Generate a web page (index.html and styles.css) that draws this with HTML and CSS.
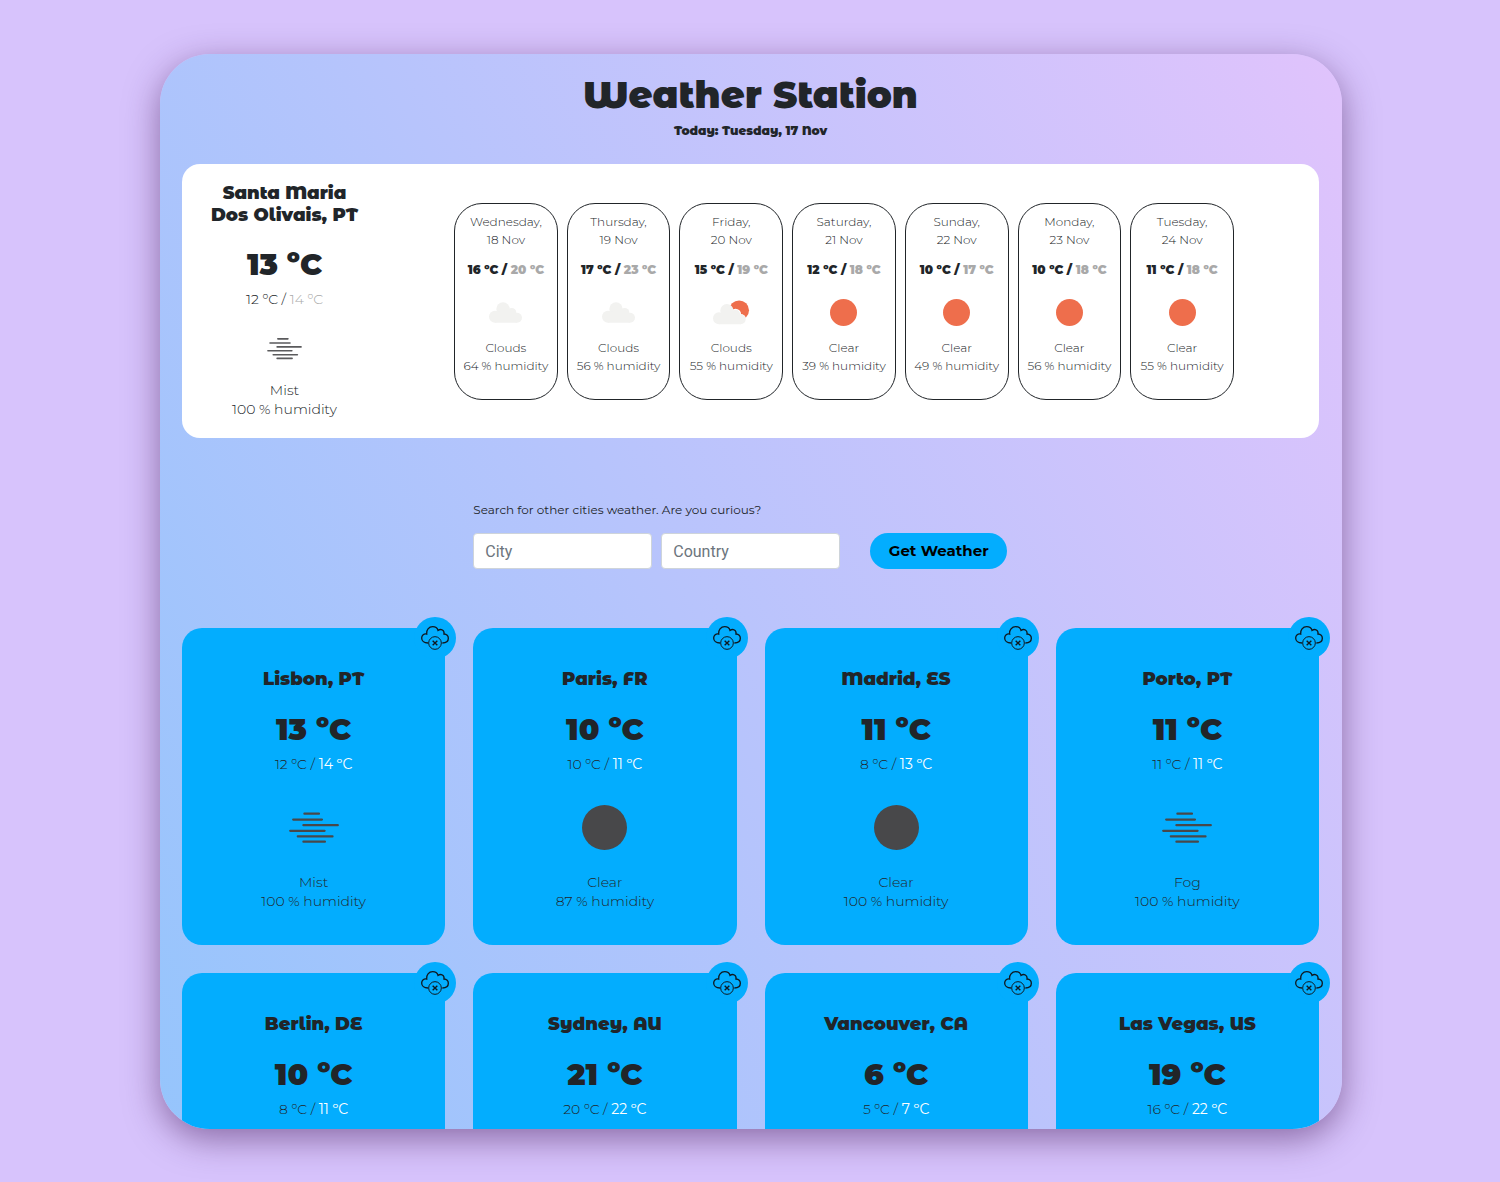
FILE: index.html
```html
<!DOCTYPE html>
<html lang="en">
<head>
<meta charset="utf-8">
<meta name="viewport" content="width=device-width, initial-scale=1">
<title>Weather Station</title>
<link rel="stylesheet" href="styles.css">
</head>
<body>
<svg class="sprite" aria-hidden="true">
  <symbol id="mist" viewBox="0 0 150 100">
    <path d="M46 8H90M12 26H99M43 43H147M3 60H107M26 77H131M43 93H108" fill="none" stroke="currentColor" stroke-width="7" stroke-linecap="round"/>
  </symbol>
  <symbol id="cloud" viewBox="0 0 99 63">
    <g fill="#f2f2f0">
      <circle cx="18" cy="44" r="18"/>
      <circle cx="42" cy="21" r="20"/>
      <circle cx="68" cy="32" r="14"/>
      <circle cx="84" cy="47" r="15"/>
      <path d="M18 62H84V40L68 24H42L22 30Z"/>
    </g>
  </symbol>
  <symbol id="partly" viewBox="0 0 112 75">
    <circle cx="79" cy="31" r="30" fill="#ee6e4c"/>
    <circle cx="68" cy="43" r="17" fill="#fff"/>
    <circle cx="84" cy="58" r="16" fill="#fff"/>
    <g fill="#f2f2f0">
      <circle cx="18" cy="55" r="18"/>
      <circle cx="42" cy="32" r="20"/>
      <circle cx="68" cy="43" r="14"/>
      <circle cx="84" cy="58" r="15"/>
      <path d="M18 73H84V51L68 35H42L22 41Z"/>
    </g>
  </symbol>
  <symbol id="clear" viewBox="0 0 20 20">
    <circle cx="10" cy="10" r="10" fill="currentColor"/>
  </symbol>
  <symbol id="remove" viewBox="0 0 84 72">
    <path d="M21 51C9 51 2 44 2 36C2 28 9 22 17 24C15 12 24 2 35 2C43 2 49 6 51 13C60 7 71 13 69 24C77 24 82 30 82 37C82 46 75 51 64 51" fill="none" stroke="#10181f" stroke-width="4"/>
    <circle cx="42" cy="51" r="19" fill="none" stroke="#10181f" stroke-width="3"/>
    <path d="M35 44L49 58M49 44L35 58" stroke="#10181f" stroke-width="4"/>
  </symbol>
</svg>
<main class="station">
  <header class="heading">
    <h1 class="title">Weather Station</h1>
    <p class="today">Today: Tuesday, 17 Nov</p>
  </header>

  <section class="local">
    <div class="current">
      <h2 class="place">Santa Maria<br>Dos Olivais, PT</h2>
      <p class="temp">13 ºC</p>
      <p class="range">12 ºC / <span class="high">14 ºC</span></p>
      <div class="icon"><svg class="mist"><use href="#mist"/></svg></div>
      <p class="details">Mist<br>100 % humidity</p>
    </div>
    <ul class="forecast">
      <li class="day"><p>Wednesday,<br>18 Nov</p><p class="day-range">16 ºC / <span class="high">20 ºC</span></p><div class="day-icon"><svg class="cloud"><use href="#cloud"/></svg></div><p>Clouds<br>64 % humidity</p></li>
      <li class="day"><p>Thursday,<br>19 Nov</p><p class="day-range">17 ºC / <span class="high">23 ºC</span></p><div class="day-icon"><svg class="cloud"><use href="#cloud"/></svg></div><p>Clouds<br>56 % humidity</p></li>
      <li class="day"><p>Friday,<br>20 Nov</p><p class="day-range">15 ºC / <span class="high">19 ºC</span></p><div class="day-icon"><svg class="partly"><use href="#partly"/></svg></div><p>Clouds<br>55 % humidity</p></li>
      <li class="day"><p>Saturday,<br>21 Nov</p><p class="day-range">12 ºC / <span class="high">18 ºC</span></p><div class="day-icon"><svg class="sun"><use href="#clear"/></svg></div><p>Clear<br>39 % humidity</p></li>
      <li class="day"><p>Sunday,<br>22 Nov</p><p class="day-range">10 ºC / <span class="high">17 ºC</span></p><div class="day-icon"><svg class="sun"><use href="#clear"/></svg></div><p>Clear<br>49 % humidity</p></li>
      <li class="day"><p>Monday,<br>23 Nov</p><p class="day-range">10 ºC / <span class="high">18 ºC</span></p><div class="day-icon"><svg class="sun"><use href="#clear"/></svg></div><p>Clear<br>56 % humidity</p></li>
      <li class="day"><p>Tuesday,<br>24 Nov</p><p class="day-range">11 ºC / <span class="high">18 ºC</span></p><div class="day-icon"><svg class="sun"><use href="#clear"/></svg></div><p>Clear<br>55 % humidity</p></li>
    </ul>
  </section>

  <div class="search-row">
    <form class="search">
      <label class="search-label" for="city">Search for other cities weather. Are you curious?</label>
      <div class="fields">
        <input class="field" id="city" type="text" placeholder="City">
        <input class="field" type="text" placeholder="Country" aria-label="Country">
        <button class="submit" type="button">Get Weather</button>
      </div>
    </form>
  </div>

  <section class="cities">
    <article class="city">
      <button class="remove" type="button" aria-label="Remove"><svg><use href="#remove"/></svg></button>
      <h2 class="place">Lisbon, PT</h2>
      <p class="temp">13 ºC</p>
      <p class="range">12 ºC / <span class="high">14 ºC</span></p>
      <div class="icon"><svg class="mist"><use href="#mist"/></svg></div>
      <p class="details">Mist<br>100 % humidity</p>
    </article>
    <article class="city">
      <button class="remove" type="button" aria-label="Remove"><svg><use href="#remove"/></svg></button>
      <h2 class="place">Paris, FR</h2>
      <p class="temp">10 ºC</p>
      <p class="range">10 ºC / <span class="high">11 ºC</span></p>
      <div class="icon"><svg class="moon"><use href="#clear"/></svg></div>
      <p class="details">Clear<br>87 % humidity</p>
    </article>
    <article class="city">
      <button class="remove" type="button" aria-label="Remove"><svg><use href="#remove"/></svg></button>
      <h2 class="place">Madrid, ES</h2>
      <p class="temp">11 ºC</p>
      <p class="range">8 ºC / <span class="high">13 ºC</span></p>
      <div class="icon"><svg class="moon"><use href="#clear"/></svg></div>
      <p class="details">Clear<br>100 % humidity</p>
    </article>
    <article class="city">
      <button class="remove" type="button" aria-label="Remove"><svg><use href="#remove"/></svg></button>
      <h2 class="place">Porto, PT</h2>
      <p class="temp">11 ºC</p>
      <p class="range">11 ºC / <span class="high">11 ºC</span></p>
      <div class="icon"><svg class="mist"><use href="#mist"/></svg></div>
      <p class="details">Fog<br>100 % humidity</p>
    </article>
    <article class="city">
      <button class="remove" type="button" aria-label="Remove"><svg><use href="#remove"/></svg></button>
      <h2 class="place">Berlin, DE</h2>
      <p class="temp">10 ºC</p>
      <p class="range">8 ºC / <span class="high">11 ºC</span></p>
    </article>
    <article class="city">
      <button class="remove" type="button" aria-label="Remove"><svg><use href="#remove"/></svg></button>
      <h2 class="place">Sydney, AU</h2>
      <p class="temp">21 ºC</p>
      <p class="range">20 ºC / <span class="high">22 ºC</span></p>
    </article>
    <article class="city">
      <button class="remove" type="button" aria-label="Remove"><svg><use href="#remove"/></svg></button>
      <h2 class="place">Vancouver, CA</h2>
      <p class="temp">6 ºC</p>
      <p class="range">5 ºC / <span class="high">7 ºC</span></p>
    </article>
    <article class="city">
      <button class="remove" type="button" aria-label="Remove"><svg><use href="#remove"/></svg></button>
      <h2 class="place">Las Vegas, US</h2>
      <p class="temp">19 ºC</p>
      <p class="range">16 ºC / <span class="high">22 ºC</span></p>
    </article>
  </section>
</main>
</body>
</html>
```
FILE: styles.css
```css
* {
  box-sizing: border-box;
}

body {
  display: flex;
  height: 100vh;
  margin: 0;
  padding: 54px 158px 53px 160px;
  background: #d7c3fc;
  color: #212529;
  font-family: Montserrat, Inter, sans-serif;
  font-size: 14px;
  font-weight: 300;
}

h1, h2, p, ul {
  margin: 0;
  padding: 0;
}

svg {
  display: block;
}

.sprite {
  position: absolute;
  width: 0;
  height: 0;
}

.station {
  flex: 1;
  padding: 17px 23px 28px 22px;
  overflow-y: auto;
  scrollbar-width: none;
  border-radius: 50px;
  background: linear-gradient(62deg, #8ec5fc -10%, #e0c3fc 100%);
  box-shadow: 0 10px 34px rgba(62, 20, 80, 0.5);
}

.heading {
  text-align: center;
}

.title,
.today,
.place {
  font-family: "Montserrat Alternates", Montserrat, Inter, sans-serif;
  font-weight: 900;
}

.title {
  font-size: 37px;
  line-height: 48px;
}

.today {
  margin-top: 2px;
  font-size: 12px;
  line-height: 20px;
}

.local {
  display: grid;
  grid-template-columns: 205px 1fr;
  align-items: center;
  margin-top: 23px;
  border-radius: 18px;
  background: #fff;
}

.current {
  padding: 18px 0 19px;
  text-align: center;
}

.place {
  font-size: 18px;
  line-height: 22px;
}

.temp {
  margin-top: 20px;
  font-size: 30px;
  font-weight: 900;
  line-height: 38px;
}

.range {
  margin-top: 5px;
  line-height: 20px;
}

.icon {
  display: grid;
  place-items: center;
  height: 45px;
  margin-top: 31px;
}

.details {
  margin-top: 23px;
  line-height: 19px;
}

.current .icon {
  margin-top: 17px;
}

.current .details {
  margin-top: 10px;
}

.local .high {
  color: #a9a9a9;
}

.mist {
  width: 50px;
  height: 33px;
  color: #48484a;
}

.current .mist {
  width: 35px;
  height: 23px;
  color: #5a5a5c;
}

.moon {
  width: 45px;
  height: 45px;
  color: #48484a;
}

.forecast {
  display: grid;
  grid-template-columns: repeat(7, 1fr);
  gap: 9px;
  width: 780px;
  margin-left: 67px;
  list-style: none;
}

.day {
  padding: 9px 0 24px;
  border: 1px solid #212529;
  border-radius: 28px;
  font-size: 12px;
  line-height: 18px;
  text-align: center;
}

.day-range {
  margin-top: 12px;
  font-weight: 900;
}

.day-icon {
  display: grid;
  place-items: center;
  height: 27px;
  margin: 20px 0 13px;
}

.cloud {
  width: 33px;
  height: 21px;
}

.partly {
  width: 37px;
  height: 25px;
}

.sun {
  width: 27px;
  height: 27px;
  color: #ee6e4c;
}

.search-row,
.cities {
  display: grid;
  grid-template-columns: repeat(4, 1fr);
  gap: 28px;
}

.search {
  grid-column: 2 / -1;
  margin: 63px 0 59px;
}

.search-label {
  display: block;
  font-size: 12px;
  font-weight: 400;
  line-height: 18px;
}

.fields {
  display: flex;
  align-items: center;
  margin-top: 14px;
}

.field {
  width: 179px;
  height: 36px;
  margin-right: 9px;
  padding: 0 11px;
  border: 1px solid #ced4da;
  border-radius: 4px;
  background: #fff;
  color: #495057;
  font-family: Roboto, sans-serif;
  font-size: 16px;
}

.field::placeholder {
  color: #6c757d;
}

.submit {
  width: 137px;
  height: 36px;
  margin-left: 21px;
  padding: 0 0 2px;
  border: 0;
  border-radius: 18px;
  background: #03adfe;
  color: #000;
  font: 700 15px Montserrat, Inter, sans-serif;
}

.cities {
  grid-auto-rows: 1fr;
}

.city {
  position: relative;
  padding: 40px 0 34px;
  border-radius: 20px;
  background: #03adfe;
  text-align: center;
}

.city .temp {
  margin-top: 21px;
}

.city .high {
  color: #fff;
  font-weight: 400;
}

.remove {
  position: absolute;
  top: -11px;
  right: -11px;
  display: grid;
  place-items: center;
  width: 42px;
  height: 42px;
  padding: 0;
  border: 0;
  border-radius: 50%;
  background: #03adfe;
}

.remove svg {
  width: 28px;
  height: 24px;
}
```
